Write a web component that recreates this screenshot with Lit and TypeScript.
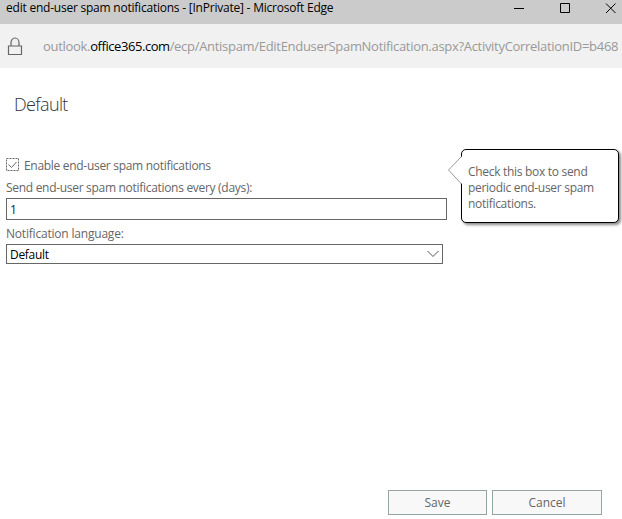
import { LitElement, html, css } from "lit";
import { customElement } from "lit/decorators.js";

@customElement("app-root")
export class AppRoot extends LitElement {
  static styles = css`
    :host {
      display: flex;
      flex-direction: column;
      position: relative;
      box-sizing: border-box;
      width: 622px;
      height: 519px;
      overflow: hidden;
      background: #fff;
      color: #666;
      font: 12px/16px "Open Sans", "Noto Sans", sans-serif;
      letter-spacing: -0.3px;
      white-space: nowrap;
    }
    * { box-sizing: border-box; }
    svg { display: block; flex: none; fill: none; }
    .titlebar {
      height: 24px;
      flex: none;
      display: flex;
      justify-content: space-between;
      background: #cbcbcb;
      color: #000;
      padding: 0 6px;
    }
    .title { line-height: 15px; letter-spacing: -0.225px; }
    .address {
      height: 44px;
      flex: none;
      display: flex;
      align-items: flex-start;
      background: #f1f1f1;
      padding: 12px 0 0 7px;
    }
    .url {
      margin: 0 0 0 20px;
      font-size: 13px;
      line-height: 20px;
      color: #999;
    }
    .url b { font-weight: 400; color: #000; letter-spacing: -0.44px; }
    h1 {
      margin: 24px 0 0 14px;
      font-size: 18px;
      line-height: 24px;
      font-weight: 300;
      color: #333;
      letter-spacing: -0.65px;
    }
    .form { display: flex; flex-direction: column; padding: 42px 0 0 6px; }
    .check { display: flex; height: 16px; }
    .check span { margin-left: 5px; }
    .label { margin-top: 6px; height: 16px; }
    .label.lang { letter-spacing: -0.2px; }
    .field {
      display: flex;
      align-items: center;
      justify-content: space-between;
      width: 441px;
      height: 22px;
      margin-top: 2px;
      padding: 2px 3px 0;
      border: 1px solid #666;
      color: #222;
    }
    .select { width: 437px; height: 20px; color: #000; }
    .select svg { margin-top: -3px; }
    .tip {
      position: absolute;
      left: 461px;
      top: 149px;
      width: 158px;
      height: 74px;
      padding: 14px 6px;
      border: 1px solid #000;
      border-radius: 5px;
      background: #fff;
      box-shadow: 2px 2px 3px #888;
      white-space: pre;
    }
    .arrow { position: absolute; left: -15px; top: 5px; }
    .actions {
      display: flex;
      gap: 5px;
      margin: auto 20px 4px auto;
    }
    button {
      width: 99px;
      height: 25px;
      padding: 0;
      border: 1px solid #95a5a3;
      background: #f8f8f8;
      color: #666;
      font: inherit;
      letter-spacing: 0;
      line-height: 23px;
    }
    button.wide { width: 110px; }
  `;

  render() {
    return html`
      <div class="titlebar">
        <span class="title">edit end-user spam notifications - [InPrivate] - Microsoft Edge</span>
        <svg width="102" height="16" stroke="#000">
          <path d="M0 8.5h10M46.5 3.5h9v9h-9zM92 3.5l9.5 9.5M101.5 3.5l-9.5 9.5" />
        </svg>
      </div>
      <div class="address">
        <svg width="16" height="20" stroke="#666" stroke-width="1.2">
          <path d="M1.5 10h13v8.5h-13zM4 10V6.5a4 4.5 0 0 1 8 0V10" />
        </svg>
        <span class="url">outlook.<b>office365.com</b>/ecp/Antispam/EditEnduserSpamNotification.aspx?ActivityCorrelationID=b468</span>
      </div>
      <h1>Default</h1>
      <div class="form">
        <div class="check">
          <svg width="13" height="13" stroke="#666">
            <rect x=".5" y=".5" width="12" height="12" stroke-dasharray="2 1" />
            <path d="M2.5 6.5l3 3 5-5.5" />
          </svg>
          <span>Enable end-user spam notifications</span>
        </div>
        <div class="label">Send end-user spam notifications every (days):</div>
        <div class="field">1</div>
        <div class="label lang">Notification language:</div>
        <div class="field select">
          Default
          <svg width="12" height="8" stroke="#555"><path d="M.5 1l5.5 5.5L11.5 1" /></svg>
        </div>
      </div>
      <div class="actions"><button>Save</button><button class="wide">Cancel</button></div>
      <div class="tip"><svg class="arrow" width="16" height="30"><path d="M15 1.5L1.5 15 15 29z" fill="#fff" /><path d="M14.5 1.5L1.5 15l13 14" stroke="#999" /></svg>Check this box to send
periodic end-user spam
notifications.</div>
    `;
  }
}
